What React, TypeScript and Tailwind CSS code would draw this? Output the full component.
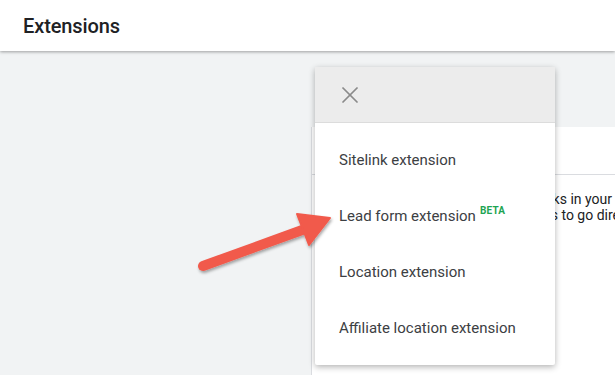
import { X } from 'lucide-react';

const items = [
  { label: 'Sitelink extension' },
  { label: 'Lead form extension', beta: true },
  { label: 'Location extension' },
  { label: 'Affiliate location extension' },
];

export default function App() {
  return (
    <div className="relative w-[615px] h-[375px] overflow-hidden bg-[#f1f3f4] font-['Roboto',sans-serif]">
      {/* Page header */}
      <header className="relative z-10 h-[51px] bg-white flex items-center px-[23px] shadow-[0_1px_3px_rgba(0,0,0,0.35)]">
        <h1 className="text-[20px] font-medium text-[#202124] tracking-[-0.1px]">Extensions</h1>
      </header>

      {/* Card behind the menu */}
      <div className="ml-[311px] mt-[76px] h-[260px] bg-white border-l border-[#dadce0] overflow-hidden">
        <div className="h-[48px] border-b border-[#dadce0]" />
        <div className="pt-[16px] text-[14px] leading-[16px] text-[#202124] whitespace-nowrap">
          <p className="text-right pr-[3px]">Add sitelinks in your</p>
          <p className="pl-[208px]">pages to go directly</p>
        </div>
      </div>

      {/* Add extension menu */}
      <div className="absolute left-[315px] top-[67px] w-[240px] bg-white rounded-[2px] shadow-[0_2px_6px_rgba(0,0,0,0.3)]">
        <div className="h-[56px] bg-[#ececec] border-b border-[#dcdcdc] flex items-center pl-[21px]">
          <X className="w-[28px] h-[28px] text-[#8a8a8a]" strokeWidth={1.5} />
        </div>
        <ul className="pt-[9px] pb-[9px]">
          {items.map((item) => (
            <li key={item.label} className="h-[56px] flex items-center pl-[24px] text-[15px] text-[#3c4043]">
              <span>{item.label}</span>
              {item.beta && (
                <span className="ml-[4px] -mt-[11px] text-[10px] font-bold text-[#1ea453] tracking-[0.2px]">BETA</span>
              )}
            </li>
          ))}
        </ul>
      </div>

      {/* Annotation arrow */}
      <svg className="absolute left-0 top-0 pointer-events-none" width="615" height="375" viewBox="0 0 615 375">
        <defs>
          <filter id="arrowShadow" x="-20%" y="-20%" width="140%" height="140%">
            <feDropShadow dx="1" dy="2" stdDeviation="1.5" floodColor="#000" floodOpacity="0.35" />
          </filter>
        </defs>
        <g filter="url(#arrowShadow)" fill="#f15a4c" stroke="#f15a4c">
          <line x1="203" y1="266" x2="305" y2="229" strokeWidth="10" strokeLinecap="round" />
          <polygon points="330,218 297,214 309,245" strokeWidth="2" strokeLinejoin="round" />
        </g>
      </svg>
    </div>
  );
}
